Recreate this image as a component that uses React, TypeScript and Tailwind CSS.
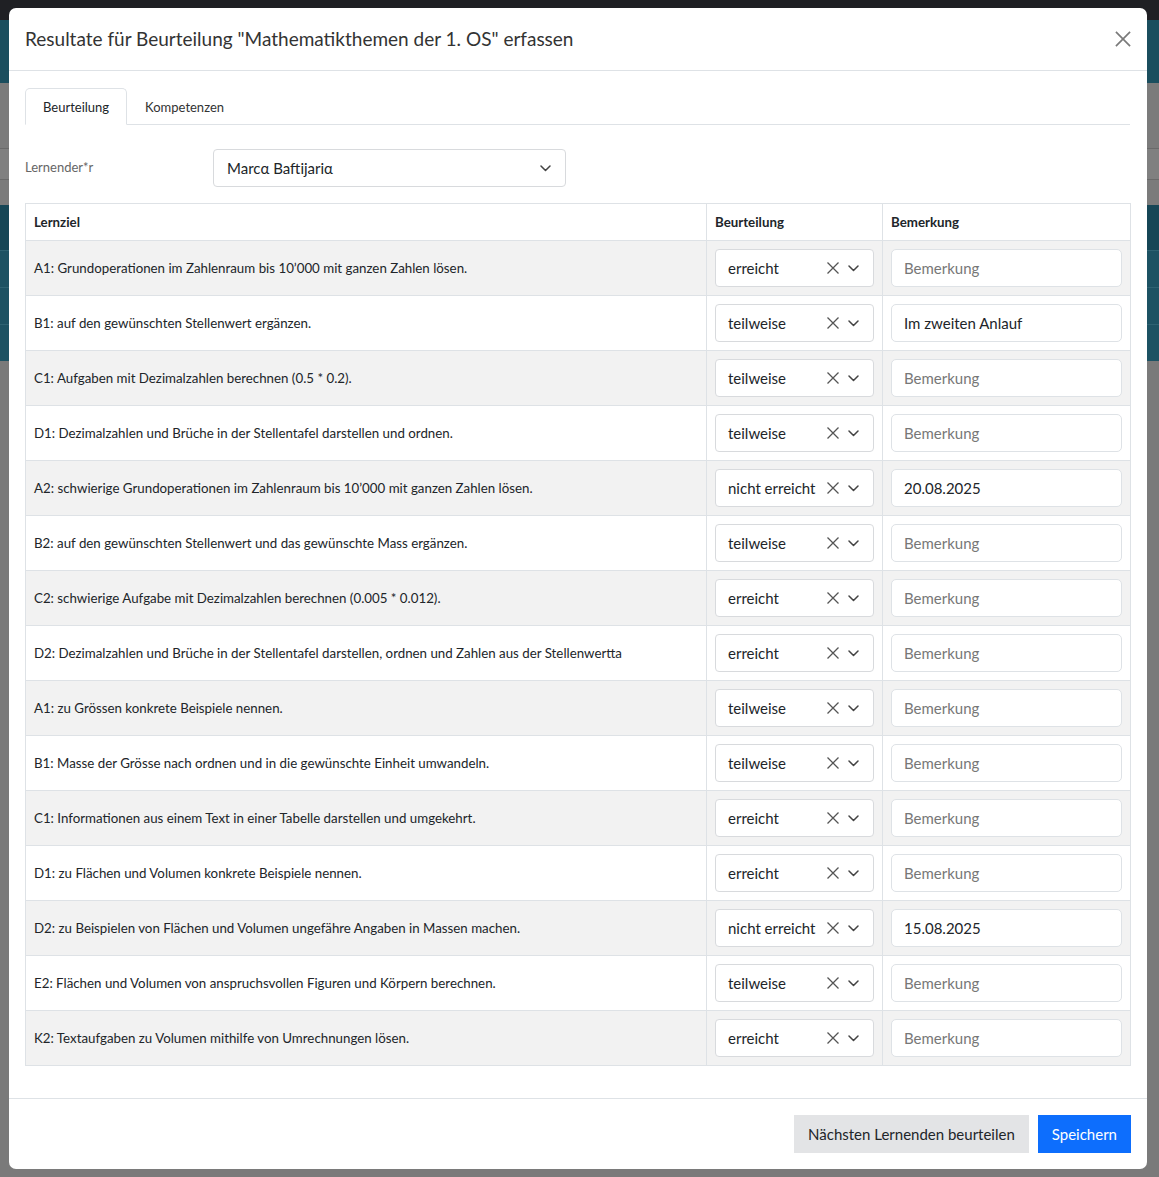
import React from "react";

type Row = { goal: string; grade: string; note?: string };

const rows: Row[] = [
  { goal: "A1: Grundoperationen im Zahlenraum bis 10’000 mit ganzen Zahlen lösen.", grade: "erreicht" },
  { goal: "B1: auf den gewünschten Stellenwert ergänzen.", grade: "teilweise", note: "Im zweiten Anlauf" },
  { goal: "C1: Aufgaben mit Dezimalzahlen berechnen (0.5 * 0.2).", grade: "teilweise" },
  { goal: "D1: Dezimalzahlen und Brüche in der Stellentafel darstellen und ordnen.", grade: "teilweise" },
  { goal: "A2: schwierige Grundoperationen im Zahlenraum bis 10’000 mit ganzen Zahlen lösen.", grade: "nicht erreicht", note: "20.08.2025" },
  { goal: "B2: auf den gewünschten Stellenwert und das gewünschte Mass ergänzen.", grade: "teilweise" },
  { goal: "C2: schwierige Aufgabe mit Dezimalzahlen berechnen (0.005 * 0.012).", grade: "erreicht" },
  { goal: "D2: Dezimalzahlen und Brüche in der Stellentafel darstellen, ordnen und Zahlen aus der Stellenwertta", grade: "erreicht" },
  { goal: "A1: zu Grössen konkrete Beispiele nennen.", grade: "teilweise" },
  { goal: "B1: Masse der Grösse nach ordnen und in die gewünschte Einheit umwandeln.", grade: "teilweise" },
  { goal: "C1: Informationen aus einem Text in einer Tabelle darstellen und umgekehrt.", grade: "erreicht" },
  { goal: "D1: zu Flächen und Volumen konkrete Beispiele nennen.", grade: "erreicht" },
  { goal: "D2: zu Beispielen von Flächen und Volumen ungefähre Angaben in Massen machen.", grade: "nicht erreicht", note: "15.08.2025" },
  { goal: "E2: Flächen und Volumen von anspruchsvollen Figuren und Körpern berechnen.", grade: "teilweise" },
  { goal: "K2: Textaufgaben zu Volumen mithilfe von Umrechnungen lösen.", grade: "erreicht" },
];

function Cross({ size = 14, className = "" }: { size?: number; className?: string }) {
  return (
    <svg width={size} height={size} viewBox="0 0 14 14" className={className} fill="none" stroke="currentColor" strokeWidth="1.3">
      <path d="M1.5 1.5l11 11M12.5 1.5l-11 11" />
    </svg>
  );
}

function Chevron({ className = "" }: { className?: string }) {
  return (
    <svg width="11" height="7" viewBox="0 0 11 7" className={className} fill="none" stroke="currentColor" strokeWidth="1.5" strokeLinecap="round" strokeLinejoin="round">
      <path d="M1 1l4.5 4.5L10 1" />
    </svg>
  );
}

function Backdrop() {
  return (
    <div className="flex flex-col h-full">
      <div className="h-[20px] bg-[#1f2024]" />
      <div className="h-[63px] bg-[#1b4e5e]" />
      <div className="h-[65px] bg-[#7b7b7b]" />
      <div className="h-[32px] bg-[#808080] border-y border-[#6a6a6a]" />
      <div className="h-[25px] bg-[#7b7b7b]" />
      <div className="h-[45px] bg-[#164656]" />
      <div className="h-[37px] bg-[#1d5263] border-t border-[#2e6272]" />
      <div className="h-[37px] bg-[#1d5263] border-t border-[#2e6272]" />
      <div className="h-[37px] bg-[#1d5263] border-t border-[#2e6272]" />
      <div className="flex-1 bg-[#7a7a7a]" />
    </div>
  );
}

export default function App() {
  return (
    <div className="relative w-full h-[1177px] overflow-hidden font-['Lato',sans-serif] text-[#212529]">
      <Backdrop />

      <div className="absolute left-[9px] top-[8px] w-[1138px] h-[1161px] bg-white rounded-[7px] flex flex-col">
        <header className="h-[63px] border-b border-[#dee2e6] flex items-center justify-between pl-[16px] pr-[15px]">
          <h1 className="text-[19px] text-[#333] pt-[1px]">
            Resultate für Beurteilung "Mathematikthemen der 1. OS" erfassen
          </h1>
          <Cross size={18} className="text-[#7a7a7a]" />
        </header>

        <div className="flex-1 px-[16px] pt-[17px]">
          <div className="flex border-b border-[#dee2e6] h-[37px] mr-[1px]">
            <div className="px-[17px] pt-[2px] flex items-center text-[13px] bg-white border border-[#dee2e6] border-b-white rounded-t-[5px] -mb-px">
              Beurteilung
            </div>
            <div className="px-[18px] pt-[3px] flex items-center text-[13px] text-[#333]">Kompetenzen</div>
          </div>

          <div className="flex items-start mt-[24px]">
            <label className="w-[188px] text-[13px] text-[#666] pt-[9px]">Lernender*r</label>
            <div className="w-[353px] h-[38px] border border-[#d8dadd] rounded-[4px] flex items-center justify-between pl-[13px] pr-[14px]">
              <span className="text-[15px] pt-[1px]">Marcα Baftijariα</span>
              <Chevron className="text-[#444]" />
            </div>
          </div>

          <table className="w-[1106px] mt-[16px] border-collapse text-[13.3px]">
            <thead>
              <tr className="h-[37px]">
                <th className="w-[681px] border border-[#dee2e6] text-left font-bold px-[8px] pt-[2px]">Lernziel</th>
                <th className="w-[176px] border border-[#dee2e6] text-left font-bold px-[8px] pt-[2px]">Beurteilung</th>
                <th className="border border-[#dee2e6] text-left font-bold px-[8px] pt-[2px]">Bemerkung</th>
              </tr>
            </thead>
            <tbody>
              {rows.map((r, i) => (
                <tr key={i} className={i % 2 === 0 ? "h-[55px] bg-[#f2f2f2]" : "h-[55px] bg-white"}>
                  <td className="border border-[#dee2e6] px-[8px] pt-[2px] whitespace-nowrap overflow-hidden">{r.goal}</td>
                  <td className="border border-[#dee2e6] px-[8px]">
                    <div className="h-[38px] bg-white border border-[#d8dadd] rounded-[4px] flex items-center pl-[12px] pr-[14px]">
                      <span className="text-[15px] flex-1 whitespace-nowrap pt-[1px]">{r.grade}</span>
                      <Cross size={14} className="text-[#555] mr-[8px] shrink-0" />
                      <Chevron className="text-[#444] shrink-0" />
                    </div>
                  </td>
                  <td className="border border-[#dee2e6] px-[8px]">
                    <div className="h-[38px] bg-white border border-[#dee2e6] rounded-[5px] flex items-center px-[12px] text-[15px] pt-[1px]">
                      {r.note ? <span>{r.note}</span> : <span className="text-[#777]">Bemerkung</span>}
                    </div>
                  </td>
                </tr>
              ))}
            </tbody>
          </table>
        </div>

        <footer className="h-[71px] border-t border-[#dee2e6] flex items-center justify-end gap-[9px] pr-[16px]">
          <button className="h-[38px] px-[14px] bg-[#e3e4e6] text-[15px] text-[#212529]">Nächsten Lernenden beurteilen</button>
          <button className="h-[38px] px-[14px] bg-[#0d6efd] text-[15px] text-white">Speichern</button>
        </footer>
      </div>
    </div>
  );
}
